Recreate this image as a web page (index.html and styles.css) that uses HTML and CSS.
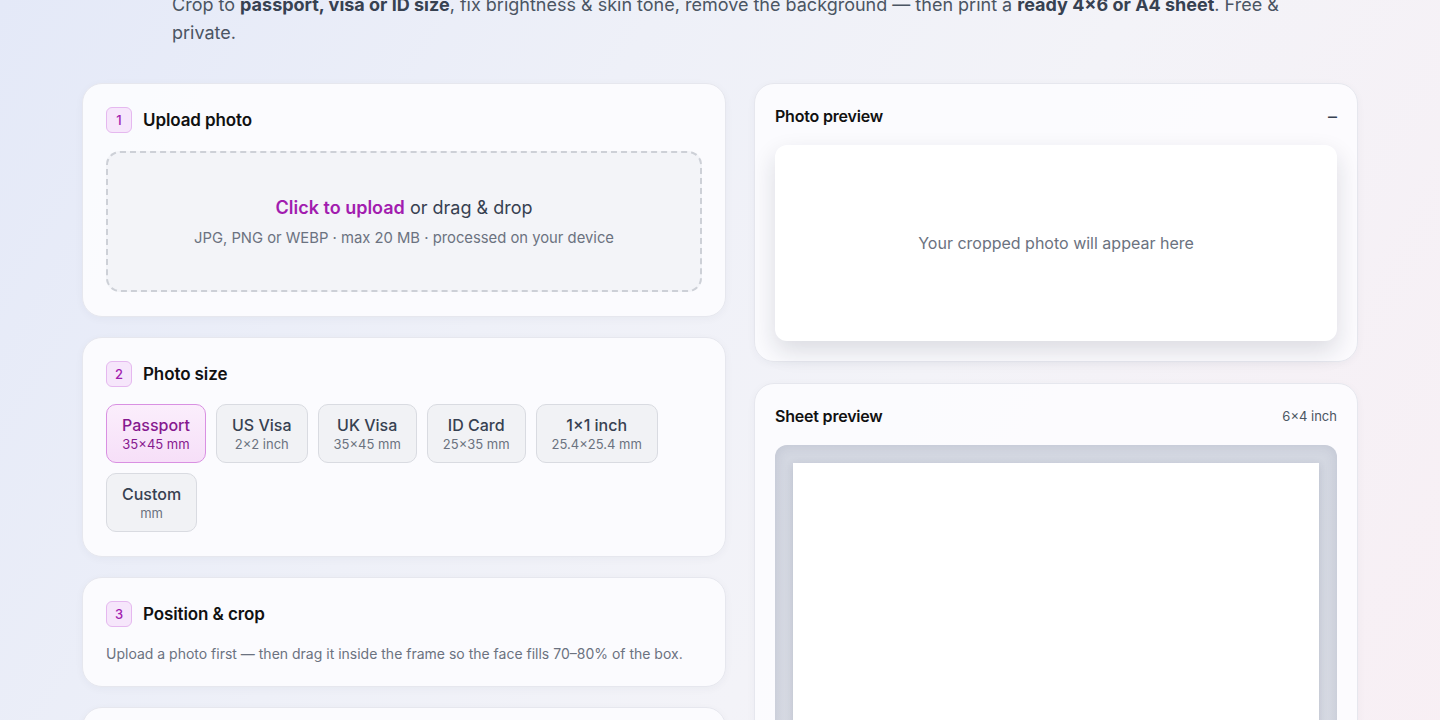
FILE: index.html
```html
<!DOCTYPE html>
<html lang="en">
<head>
  <meta charset="UTF-8">
  <meta name="viewport" content="width=device-width, initial-scale=1.0">
  <title>Passport Photo Maker</title>
  <link rel="stylesheet" href="styles.css">
</head>
<body>
  <div class="page">
    <p class="lead">Crop to <b>passport, visa or ID size</b>, fix brightness &amp; skin tone, remove the background — then print a <b>ready 4×6 or A4 sheet</b>. Free &amp; private.</p>

    <div class="layout">
      <div class="col-left">
        <div class="card">
          <div class="step-head"><span class="step-num">1</span><h3>Upload photo</h3></div>
          <div class="dropzone">
            <div class="drop-main"><span class="drop-link">Click to upload</span> or drag &amp; drop</div>
            <div class="drop-sub">JPG, PNG or WEBP · max 20 MB · processed on your device</div>
          </div>
        </div>

        <div class="card">
          <div class="step-head"><span class="step-num">2</span><h3>Photo size</h3></div>
          <div class="chips">
            <button class="chip active"><span class="chip-name">Passport</span><span class="chip-size">35×45 mm</span></button>
            <button class="chip"><span class="chip-name">US Visa</span><span class="chip-size">2×2 inch</span></button>
            <button class="chip"><span class="chip-name">UK Visa</span><span class="chip-size">35×45 mm</span></button>
            <button class="chip"><span class="chip-name">ID Card</span><span class="chip-size">25×35 mm</span></button>
            <button class="chip"><span class="chip-name">1×1 inch</span><span class="chip-size">25.4×25.4 mm</span></button>
            <button class="chip"><span class="chip-name">Custom</span><span class="chip-size">mm</span></button>
          </div>
        </div>

        <div class="card">
          <div class="step-head"><span class="step-num">3</span><h3>Position &amp; crop</h3></div>
          <p class="hint">Upload a photo first — then drag it inside the frame so the face fills 70–80% of the box.</p>
        </div>

        <div class="card">
          <div class="step-head"><span class="step-num">4</span><h3>Adjust</h3></div>
        </div>
      </div>

      <div class="col-right">
        <div class="card panel">
          <div class="panel-head"><h4>Photo preview</h4><span class="collapse">–</span></div>
          <div class="photo-box">Your cropped photo will appear here</div>
        </div>

        <div class="card panel">
          <div class="panel-head"><h4>Sheet preview</h4><span class="sheet-size">6×4 inch</span></div>
          <div class="sheet-frame">
            <div class="sheet-paper"></div>
          </div>
        </div>
      </div>
    </div>
  </div>
</body>
</html>
```

FILE: styles.css
```css
body {
  margin: 0;
  font-family: Inter, 'Noto Sans', sans-serif;
  color: #1f2937;
  background: linear-gradient(120deg, #e4e9f8 0%, #eef0f8 35%, #f3f3f8 60%, #f8eff4 100%);
  min-height: 100vh;
  overflow: hidden;
}

.page {
  width: 1276px;
  margin: -9px auto 0;
}

.lead {
  margin: 0 0 36px 90px;
  max-width: 1130px;
  font-size: 18px;
  line-height: 28px;
  color: #4b5563;
}

.lead b {
  color: #374151;
}

.layout {
  display: flex;
  gap: 28px;
  align-items: flex-start;
}

.col-left {
  width: 644px;
  display: flex;
  flex-direction: column;
  gap: 20px;
}

.col-right {
  width: 604px;
  display: flex;
  flex-direction: column;
  gap: 21px;
}

.card {
  background: rgba(252, 252, 254, 0.92);
  border: 1px solid #e6e7ee;
  border-radius: 20px;
  box-shadow: 0 2px 8px rgba(30, 40, 80, 0.04);
  padding: 23px 23px 24px;
}

.step-head {
  display: flex;
  align-items: center;
  gap: 11px;
}

.step-head h3 {
  margin: 0;
  font-size: 17px;
  font-weight: 600;
  color: #111;
  letter-spacing: -0.1px;
}

.step-num {
  width: 24px;
  height: 24px;
  border-radius: 6px;
  border: 1px solid #e5b8ef;
  background: #f6e6fb;
  color: #a21caf;
  font-size: 13px;
  font-weight: 500;
  display: flex;
  align-items: center;
  justify-content: center;
}

.dropzone {
  margin-top: 18px;
  height: 137px;
  border: 2px dashed #cdd0d7;
  border-radius: 14px;
  background: #f3f4f8;
  display: flex;
  flex-direction: column;
  align-items: center;
  justify-content: center;
  gap: 11px;
}

.drop-main {
  font-size: 18px;
  color: #374151;
}

.drop-link {
  color: #a21caf;
  font-weight: 600;
}

.drop-sub {
  font-size: 14.8px;
  color: #6b7280;
}

.chips {
  margin-top: 17px;
  display: flex;
  flex-wrap: wrap;
  gap: 10px;
}

.chip {
  display: flex;
  flex-direction: column;
  align-items: center;
  justify-content: center;
  gap: 1px;
  height: 59px;
  padding: 0 15px;
  border: 1px solid #d9dbe1;
  border-radius: 10px;
  background: #f1f2f5;
  font-family: inherit;
  cursor: pointer;
}

.chip-name {
  font-size: 16px;
  font-weight: 500;
  color: #374151;
}

.chip-size {
  font-size: 13px;
  color: #6b7280;
}

.chip.active {
  background: linear-gradient(180deg, #fbeefc 0%, #f6dff8 100%);
  border-color: #d990e2;
}

.chip.active .chip-name,
.chip.active .chip-size {
  color: #86198f;
}

.hint {
  margin: 18px 0 0;
  font-size: 14px;
  color: #6b7280;
  white-space: nowrap;
}

.panel {
  padding: 20px 20px 20px;
}

.panel-head {
  display: flex;
  justify-content: space-between;
  align-items: center;
  height: 24px;
}

.panel-head h4 {
  margin: 0;
  font-size: 16px;
  font-weight: 600;
  color: #111;
  letter-spacing: -0.2px;
}

.collapse {
  font-size: 18px;
  color: #374151;
}

.sheet-size {
  font-size: 13px;
  color: #4b5563;
}

.photo-box {
  margin-top: 17px;
  height: 196px;
  background: #fff;
  border-radius: 12px;
  box-shadow: 0 10px 24px rgba(20, 25, 50, 0.14);
  display: flex;
  align-items: center;
  justify-content: center;
  font-size: 16px;
  color: #6b7280;
}

.sheet-frame {
  margin-top: 17px;
  padding: 18px 18px 0;
  height: 300px;
  border-radius: 12px;
  background: linear-gradient(180deg, #d3d7e1 0%, #d7dae3 100%);
  box-shadow: inset 0 0 12px rgba(80, 90, 120, 0.15);
}

.sheet-paper {
  background: #fff;
  height: 100%;
  box-shadow: 0 2px 8px rgba(40, 50, 80, 0.15);
}
```
